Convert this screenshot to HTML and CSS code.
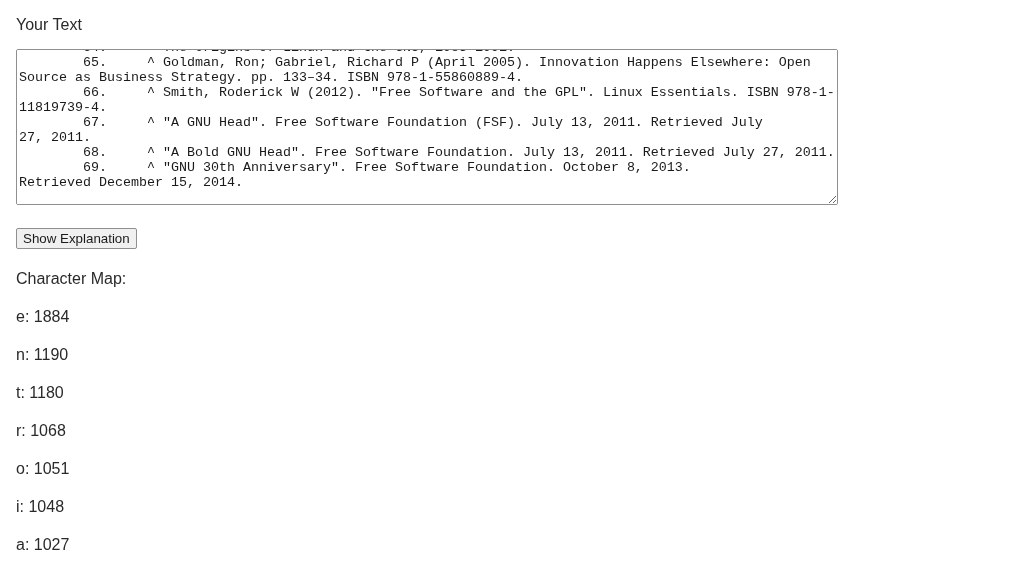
FILE: index.html
```html
<!DOCTYPE html>
<html lang="en">
<head>
<meta charset="utf-8">
<title>Character Map</title>
<link rel="stylesheet" href="styles.css">
</head>
<body>
<div class="page">
  <label class="field-label" for="src">Your Text</label>
  <textarea id="src" class="source" wrap="off" spellcheck="false">	60.	^ Stallman, Richard (2002). Free Software, Free Society. GNU Press.
	61.	^ "GNU Free Documentation License". Free Software Foundation.
	62.	^ "Why Free Software needs Free Documentation". GNU Project.
	63.	^ "The GNU Manifesto". Free Software Foundation. Retrieved 2014.
	64.	^ The Origins of Linux and the GNU, 1983-1991.
	65.	^ Goldman, Ron; Gabriel, Richard P (April 2005). Innovation Happens Elsewhere: Open
Source as Business Strategy. pp. 133–34. ISBN 978-1-55860889-4.
	66.	^ Smith, Roderick W (2012). "Free Software and the GPL". Linux Essentials. ISBN 978-1-
11819739-4.
	67.	^ "A GNU Head". Free Software Foundation (FSF). July 13, 2011. Retrieved July
27, 2011.
	68.	^ "A Bold GNU Head". Free Software Foundation. July 13, 2011. Retrieved July 27, 2011.
	69.	^ "GNU 30th Anniversary". Free Software Foundation. October 8, 2013.
Retrieved December 15, 2014.
</textarea>
  <div class="actions">
    <button type="button" class="explain-btn">Show Explanation</button>
  </div>
  <div class="map-title">Character Map:</div>
  <div class="map-list">
    <p class="map-item">e: 1884</p>
    <p class="map-item">n: 1190</p>
    <p class="map-item">t: 1180</p>
    <p class="map-item">r: 1068</p>
    <p class="map-item">o: 1051</p>
    <p class="map-item">i: 1048</p>
    <p class="map-item">a: 1027</p>
  </div>
</div>
<script src="app.js"></script>
</body>
</html>
```

FILE: styles.css
```css
html, body {
  margin: 0;
  padding: 0;
  background: #ffffff;
}

.page {
  padding: 0 16px;
  font-family: "Liberation Sans", Arial, sans-serif;
  font-size: 16px;
  color: #2a2a2a;
}

.field-label {
  display: block;
  line-height: 18px;
  padding-top: 16px;
}

.source {
  display: block;
  box-sizing: border-box;
  width: 822px;
  height: 156px;
  margin-top: 15px;
  padding: 2px;
  border: 1px solid #8f8f8f;
  border-radius: 2px;
  font-family: "Liberation Mono", "Courier New", monospace;
  font-size: 13.333px;
  color: #1a1a1a;
  tab-size: 8;
  white-space: pre;
  overflow: auto;
  scrollbar-width: none;
  resize: both;
}

.actions {
  margin-top: 23px;
  display: flex;
}

.explain-btn {
  font-family: "Liberation Sans", Arial, sans-serif;
  font-size: 13.333px;
  color: #1a1a1a;
  background: #f0f0f0;
  border: 1px solid #8f8f8f;
  border-radius: 2px;
  padding: 1px 6px;
  height: 21px;
  line-height: 15px;
}

.map-title {
  margin-top: 19px;
  line-height: 22px;
}

.map-list {
  display: flex;
  flex-direction: column;
  gap: 16px;
  margin-top: 16px;
}

.map-item {
  margin: 0;
  line-height: 22px;
}
```

FILE: app.js
```js
var ta = document.getElementById('src');
ta.scrollTop = ta.scrollHeight - ta.clientHeight - 3;
```
